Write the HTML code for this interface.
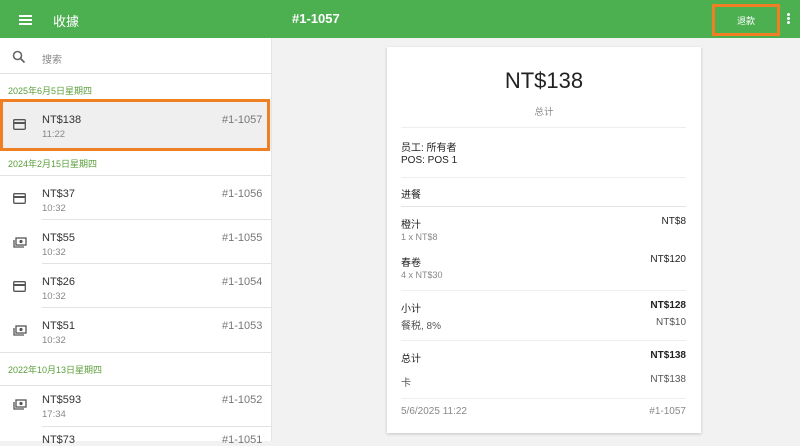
<!DOCTYPE html>
<html><head><meta charset="utf-8"><style>
*{margin:0;padding:0;box-sizing:border-box}
body{width:800px;height:441px;overflow:hidden;background:#f2f2f2;font-family:"Liberation Sans","Noto Sans CJK SC",sans-serif;position:relative;color:#222}
.a{position:absolute;white-space:nowrap}
#hdr{left:0;top:0;width:800px;height:38px;background:#4caf50}
#left{left:0;top:38px;width:272px;height:403px;background:#fff;border-right:1px solid #e4e4e4}
.line{position:absolute;height:1px;background:#e2e2e2}
.dh{font-size:9px;color:#5a9e3a}
.amt{font-size:11px;color:#333}
.tm{font-size:9.5px;color:#888}
.no{font-size:11px;color:#777}
.c{font-size:10px}
.g{color:#888}
.r{right:114px;text-align:right}
</style></head><body>
<div class="a" id="hdr"></div>
<div class="a" style="left:19px;top:15px;width:13px;height:2px;background:#fff;box-shadow:0 4px 0 #fff,0 8px 0 #fff"></div>
<div class="a" style="left:53px;top:11px;font-size:13px;color:#fff">收據</div>
<div class="a" style="left:292px;top:11px;font-size:13px;color:#fff;font-weight:bold">#1-1057</div>
<div class="a" style="left:712px;top:4px;width:68px;height:32px;border:3px solid #f07f24"></div>
<div class="a" style="left:737px;top:14px;font-size:9px;color:#fff">退款</div>
<div class="a" style="left:787px;top:13px;width:3px;height:3px;background:#fff;border-radius:50%;box-shadow:0 4px 0 #fff,0 8px 0 #fff"></div>

<div class="a" id="left"></div>
<svg class="a" style="left:12px;top:50px" width="14" height="14" viewBox="0 0 14 14"><circle cx="5.5" cy="5.5" r="4" fill="none" stroke="#666" stroke-width="1.6"/><path d="M8.5 8.5L12.5 12.5" stroke="#666" stroke-width="1.8"/></svg>
<div class="a" style="left:42px;top:51px;font-size:10px;color:#888">搜索</div>
<div class="line" style="left:0;top:73px;width:272px"></div>
<div class="a dh" style="left:8px;top:84px">2025年6月5日星期四</div>
<div class="a" style="left:0;top:100px;width:271px;height:50px;background:#efefef"></div>
<div class="a" style="left:0;top:99px;width:270px;height:52px;border:3px solid #f07f24"></div>
<div class="a dh" style="left:8px;top:157px">2024年2月15日星期四</div>
<div class="line" style="left:0;top:175px;width:272px"></div>
<div class="line" style="left:42px;top:219px;width:230px"></div>
<div class="line" style="left:42px;top:263px;width:230px"></div>
<div class="line" style="left:42px;top:307px;width:230px"></div>
<div class="line" style="left:0;top:352px;width:272px"></div>
<div class="a dh" style="left:8px;top:363px">2022年10月13日星期四</div>
<div class="line" style="left:0;top:385px;width:272px"></div>
<div class="line" style="left:42px;top:426px;width:230px"></div>

<div class="a amt" style="left:42px;top:114px">NT$138</div><div class="a tm" style="left:42px;top:129px">11:22</div><div class="a no" style="left:222px;top:114px">#1-1057</div>
<div class="a amt" style="left:42px;top:188px">NT$37</div><div class="a tm" style="left:42px;top:203px">10:32</div><div class="a no" style="left:222px;top:188px">#1-1056</div>
<div class="a amt" style="left:42px;top:232px">NT$55</div><div class="a tm" style="left:42px;top:247px">10:32</div><div class="a no" style="left:222px;top:232px">#1-1055</div>
<div class="a amt" style="left:42px;top:276px">NT$26</div><div class="a tm" style="left:42px;top:291px">10:32</div><div class="a no" style="left:222px;top:276px">#1-1054</div>
<div class="a amt" style="left:42px;top:320px">NT$51</div><div class="a tm" style="left:42px;top:335px">10:32</div><div class="a no" style="left:222px;top:320px">#1-1053</div>
<div class="a amt" style="left:42px;top:394px">NT$593</div><div class="a tm" style="left:42px;top:409px">17:34</div><div class="a no" style="left:222px;top:394px">#1-1052</div>
<div class="a amt" style="left:42px;top:434px">NT$73</div><div class="a no" style="left:222px;top:434px">#1-1051</div>
<svg class="a" style="left:13px;top:119px" width="13" height="11"><rect x="0.7" y="0.7" width="11.6" height="9.6" rx="1" fill="none" stroke="#555" stroke-width="1.3"/><rect x="1" y="3" width="11" height="2" fill="#555"/></svg>
<svg class="a" style="left:13px;top:193px" width="13" height="11"><rect x="0.7" y="0.7" width="11.6" height="9.6" rx="1" fill="none" stroke="#555" stroke-width="1.3"/><rect x="1" y="3" width="11" height="2" fill="#555"/></svg>
<svg class="a" style="left:13px;top:281px" width="13" height="11"><rect x="0.7" y="0.7" width="11.6" height="9.6" rx="1" fill="none" stroke="#555" stroke-width="1.3"/><rect x="1" y="3" width="11" height="2" fill="#555"/></svg>
<svg class="a" style="left:13px;top:237px" width="14" height="11"><rect x="3" y="1" width="10" height="7" fill="none" stroke="#555" stroke-width="1.3"/><circle cx="8" cy="4.5" r="1.6" fill="#555"/><path d="M1 3v7h10" fill="none" stroke="#555" stroke-width="1.3"/></svg>
<svg class="a" style="left:13px;top:325px" width="14" height="11"><rect x="3" y="1" width="10" height="7" fill="none" stroke="#555" stroke-width="1.3"/><circle cx="8" cy="4.5" r="1.6" fill="#555"/><path d="M1 3v7h10" fill="none" stroke="#555" stroke-width="1.3"/></svg>
<svg class="a" style="left:13px;top:399px" width="14" height="11"><rect x="3" y="1" width="10" height="7" fill="none" stroke="#555" stroke-width="1.3"/><circle cx="8" cy="4.5" r="1.6" fill="#555"/><path d="M1 3v7h10" fill="none" stroke="#555" stroke-width="1.3"/></svg>

<div class="a" style="left:387px;top:47px;width:314px;height:386px;background:#fff;box-shadow:0 1px 3px rgba(0,0,0,.2)"></div>
<div class="a" style="left:387px;top:68px;width:314px;text-align:center;font-size:22px;color:#222">NT$138</div>
<div class="a" style="left:387px;top:104px;width:314px;text-align:center;font-size:9.5px;color:#888">总计</div>
<div class="line" style="left:401px;top:127px;width:285px;background:#eee"></div>
<div class="a c" style="left:401px;top:139px">员工: 所有者</div>
<div class="a c" style="left:401px;top:155px">POS: POS 1</div>
<div class="line" style="left:401px;top:177px;width:285px;background:#eee"></div>
<div class="a c" style="left:401px;top:186px">进餐</div>
<div class="line" style="left:401px;top:206px;width:285px;background:#e4e4e4"></div>
<div class="a c" style="left:401px;top:216px">橙汁</div><div class="a c r" style="top:216px">NT$8</div>
<div class="a c g" style="left:401px;top:232px;font-size:9px">1 x NT$8</div>
<div class="a c" style="left:401px;top:254px">春卷</div><div class="a c r" style="top:254px">NT$120</div>
<div class="a c g" style="left:401px;top:270px;font-size:9px">4 x NT$30</div>
<div class="line" style="left:401px;top:290px;width:285px;background:#eee"></div>
<div class="a c" style="left:401px;top:300px">小计</div><div class="a c r" style="top:300px;font-weight:bold">NT$128</div>
<div class="a c" style="left:401px;top:317px;color:#555">餐税, 8%</div><div class="a c r" style="top:317px;color:#555">NT$10</div>
<div class="line" style="left:401px;top:340px;width:285px;background:#eee"></div>
<div class="a c" style="left:401px;top:350px">总计</div><div class="a c r" style="top:350px;font-weight:bold">NT$138</div>
<div class="a c" style="left:401px;top:374px;color:#555">卡</div><div class="a c r" style="top:374px;color:#555">NT$138</div>
<div class="line" style="left:401px;top:398px;width:285px;background:#eee"></div>
<div class="a c g" style="left:401px;top:406px">5/6/2025 11:22</div><div class="a c r g" style="top:406px">#1-1057</div>
</body></html>
